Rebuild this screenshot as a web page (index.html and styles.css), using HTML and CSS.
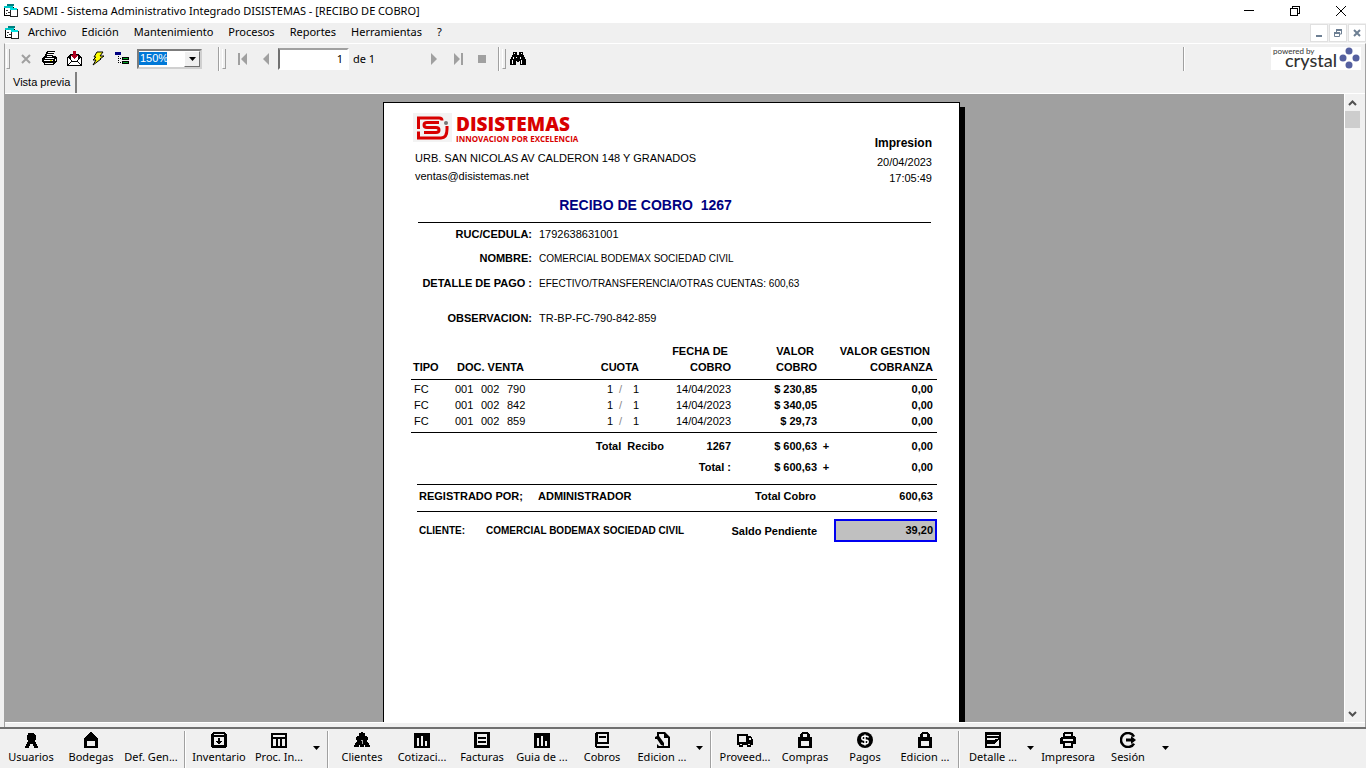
FILE: index.html
```html
<!DOCTYPE html>
<html lang="es">
<head>
<meta charset="utf-8">
<title>SADMI - Sistema Administrativo Integrado DISISTEMAS</title>
<link rel="stylesheet" href="styles.css">
</head>
<body>
<svg class="defs" aria-hidden="true">
  <symbol id="i-app" viewBox="0 0 16 16">
    <path d="M1 4h9v8H1z" fill="#fff" stroke="#000"/><path d="M1 3h9v2H1z" fill="#00c8c8"/>
    <path d="M4 1h7v2H4z" fill="#008080"/><path d="M7 6h7v7H7z" fill="#fff" stroke="#222"/><path d="M7 5h7v2H7z" fill="#00e0e0"/>
    <path d="M3 7h2v1H3zM5 9h2v1H5zM3 10h1v1H3z" fill="#333"/>
  </symbol>
  <symbol id="i-down" viewBox="0 0 7 4"><path d="M0 0h7L3.500 4z"/></symbol>
  <symbol id="i-lock" viewBox="0 0 16 16"><path d="M5 0h6v1h1v1h1v3h2v11H1V5h2V2h1V1h1zM6 2v3h4V2zM4 9v5h8V9z" fill-rule="evenodd"/></symbol>
  <symbol id="i-bars" viewBox="0 0 16 16"><path d="M0 1h16v15H0zM3 6v8h2V6zM7 4v10h2V4zM11 9v5h2V9z" fill-rule="evenodd"/></symbol>
</svg>

<header class="titlebar">
  <svg class="appicon" shape-rendering="crispEdges"><use href="#i-app"/></svg>
  <h1 class="title">SADMI - Sistema Administrativo Integrado DISISTEMAS - [RECIBO DE COBRO]</h1>
  <button class="winbtn" aria-label="Minimizar"><svg width="10" height="11" shape-rendering="crispEdges"><path d="M0 5h10v1H0z"/></svg></button>
  <button class="winbtn" aria-label="Restaurar"><svg width="10" height="10" fill="none" stroke="#000" shape-rendering="crispEdges"><path d="M.5 2.500h7v7h-7zM2.500 2V.5h7v7H8"/></svg></button>
  <button class="winbtn" aria-label="Cerrar"><svg width="10" height="10" stroke="#000"><path d="M0 0l10 10M10 0L0 10"/></svg></button>
</header>

<nav class="menubar">
  <svg class="appicon" shape-rendering="crispEdges"><use href="#i-app"/></svg>
  <button>Archivo</button><button>Edición</button><button>Mantenimiento</button><button>Procesos</button><button>Reportes</button><button>Herramientas</button><button>?</button>
  <span class="mdi">
    <button aria-label="Minimizar ventana"><svg width="8" height="8"><path d="M1 6h6v2H1z" fill="#6d7f93"/></svg></button>
    <button aria-label="Restaurar ventana"><svg width="8" height="8" fill="none" stroke="#6d7f93"><path d="M.5 4.500h5v3h-5zM2.500 4V1.500h5v3.500H6"/><path d="M0 4h6M2 1h6" stroke-width="2"/></svg></button>
    <button aria-label="Cerrar ventana"><svg width="8" height="8" stroke="#6d7f93" stroke-width="2"><path d="M1 1l6 6M7 1L1 7"/></svg></button>
  </span>
</nav>

<main class="window">
  <div class="toolbar">
    <span class="grip"></span>
    <button class="tool" aria-label="Cerrar vista"><svg width="10" height="10" stroke="#a0a0a0" stroke-width="2"><path d="M1 1l8 8M9 1L1 9"/></svg></button>
    <button class="tool" aria-label="Imprimir"><svg width="16" height="15" shape-rendering="crispEdges">
      <path d="M5 0h8v1h-1v2h-1v2h3v1h1v5h-1v1h-1v1h-1v1H2v-2H1v-1H0V7h1V6h1V5h1V3h1V1h1z"/><path d="M6 1h6v1H6zM5 3h6v1H5zM5 5h5v1H5zM3 7h9v1H3zM2 9h9v1H2zM3 12h8v1H3zM13 8h1v2h-1z" fill="#fff"/><path d="M8 9h2v1H8z" fill="#dd0"/></svg></button>
    <button class="tool" aria-label="Exportar"><svg width="15" height="15" shape-rendering="crispEdges">
      <path d="M0 6h1V5h1V4h1V3h9v1h1v1h1v1h1v9H0z"/><path d="M1 7h1v1h1v1h1v1h1v1h5v-1h1V9h1V8h1V7h1v7H1z" fill="#fff"/><path d="M4 4h7v5h-1v1H5V9H4z" fill="#fff"/><path d="M1 13h1v-1h1v-1h1v-1h1v1h5v-1h1v1h1v1h1v1h1v1h-1v-1h-1v-1h-1v-1H4v1H3v1H2v1H1z"/><path d="M6 0h3v4h2v1h-1v1H9v1H8v1H7V7H6V6H5V5H4V4h2z" fill="#b00020"/></svg></button>
    <button class="tool" aria-label="Actualizar"><svg width="14" height="15"><path d="M6 1h6L9 5h4L9 8h1L2 14l3-5H2l3-3H3z" fill="#ff0" stroke="#000"/></svg></button>
    <button class="tool" aria-label="Alternar árbol"><svg width="14" height="13" shape-rendering="crispEdges">
      <path d="M0 0h6v3H0z" fill="#000080"/><path d="M3 4h1v1H3zM3 6h1v1H3zM3 8h1v1H3zM3 10h1v1H3zM5 6h1v1H5zM5 10h1v1H5z"/><path d="M7 5h7v3H7zM7 9h7v3H7z"/><path d="M8 6h5v1H8zM8 10h5v1H8z" fill="#00a020"/></svg></button>
    <span class="zoom"><select aria-label="Zoom"><option>150%</option></select><span class="drop"><svg width="7" height="4"><use href="#i-down"/></svg></span></span>
    <span class="divider"></span><span class="grip"></span>
    <button class="tool" aria-label="Primera página"><svg width="9" height="12" fill="#a0a0a0"><path d="M0 0h2v12H0zM9 0v12L3 6z"/></svg></button>
    <button class="tool" aria-label="Página anterior"><svg width="6" height="12" fill="#a0a0a0"><path d="M6 0v12L0 6z"/></svg></button>
    <input class="pageno" type="text" value="1" aria-label="Página">
    <span class="of">de 1</span>
    <button class="tool" aria-label="Página siguiente"><svg width="6" height="12" fill="#a0a0a0"><path d="M0 0v12l6-6z"/></svg></button>
    <button class="tool" aria-label="Última página"><svg width="9" height="12" fill="#a0a0a0"><path d="M0 0v12l6-6zM7 0h2v12H7z"/></svg></button>
    <button class="tool" aria-label="Detener"><svg width="8" height="8"><path d="M0 0h8v8H0z" fill="#a0a0a0"/></svg></button>
    <span class="divider near"></span><span class="grip tight"></span>
    <button class="tool" aria-label="Buscar"><svg width="16" height="14" shape-rendering="crispEdges">
      <path d="M3 0h4v3h2V0h4v3h1v2h1v2h1v6h-6V9H9v1H7V9H6v4H0V7h1V5h1V3h1z"/><path d="M4 1h1v1H4zM11 1h1v1h-1zM3 5h1v2H3zM6 5h1v1H6zM10 5h1v2h-1zM2 8h1v4H2zM11 8h1v4h-1z" fill="#fff"/></svg></button>
    <span class="divider last"></span>
    <span class="crystal">
      <span class="words"><small>powered by</small><b>crystal</b></span>
      <svg width="22" height="22" fill="#5560a0"><circle cx="10" cy="4" r="3.500"/><circle cx="17" cy="11" r="3.500"/><circle cx="4" cy="11" r="3.500"/><circle cx="10" cy="18" r="3.500"/></svg>
    </span>
  </div>
  <div class="tabs"><button class="tab">Vista previa</button></div>

  <div class="viewer">
    <div class="canvas">
      <article class="paper">
        <header class="head">
          <div>
            <div class="brand">
              <svg width="39" height="29"><path d="M0 0h39v29H0z" fill="#f3f3f3"/><g fill="none" stroke="#d80000" stroke-width="3"><path d="M5.500 16V5H26q3 0 3 2.500"/><path d="M26 9.500H14q-3 0-3 2.500t3 2.500h9q3 0 3 2.500t-3 2.500H11"/><path d="M5.500 18.500V25H28q6 0 6-9v-3"/></g><circle cx="33" cy="10" r="2" fill="#777"/></svg>
              <div class="mark"><strong>DISISTEMAS</strong><span>INNOVACION POR EXCELENCIA</span></div>
            </div>
            <p class="line">URB. SAN NICOLAS AV CALDERON 148 Y GRANADOS</p>
            <p class="line">ventas@disistemas.net</p>
          </div>
          <div class="printed"><b>Impresion</b><span>20/04/2023</span><span>17:05:49</span></div>
        </header>
        <h2 class="doctitle">RECIBO DE COBRO&nbsp; 1267</h2>
        <dl class="fields">
          <dt>RUC/CEDULA:</dt><dd>1792638631001</dd>
          <dt>NOMBRE:</dt><dd class="long">COMERCIAL BODEMAX SOCIEDAD CIVIL</dd>
          <dt>DETALLE DE PAGO :</dt><dd class="long">EFECTIVO/TRANSFERENCIA/OTRAS CUENTAS: 600,63</dd>
          <dt class="obs">OBSERVACION:</dt><dd class="obs">TR-BP-FC-790-842-859</dd>
        </dl>
        <table class="docs">
          <colgroup><col class="c-tipo"><col class="c-doc"><col class="c-doc"><col class="c-num"><col class="c-cuota"><col class="c-bar"><col class="c-bar"><col class="c-gap"><col class="c-fecha"><col class="c-valor"><col class="c-plus"><col></colgroup>
          <thead><tr><th>TIPO</th><th colspan="3">DOC. VENTA</th><th class="r" colspan="3">CUOTA</th><th class="r" colspan="2">FECHA DE&nbsp;<br>COBRO</th><th class="r">VALOR&nbsp;<br>COBRO</th><th class="r" colspan="2">VALOR GESTION&nbsp;<br>COBRANZA</th></tr></thead>
          <tbody>
            <tr><td>FC</td><td>001</td><td>002</td><td>790</td><td class="r">1</td><td class="r bar">/</td><td class="r">1</td><td class="r" colspan="2">14/04/2023</td><td class="r b">$ 230,85</td><td></td><td class="r b">0,00</td></tr>
            <tr><td>FC</td><td>001</td><td>002</td><td>842</td><td class="r">1</td><td class="r bar">/</td><td class="r">1</td><td class="r" colspan="2">14/04/2023</td><td class="r b">$ 340,05</td><td></td><td class="r b">0,00</td></tr>
            <tr><td>FC</td><td>001</td><td>002</td><td>859</td><td class="r">1</td><td class="r bar">/</td><td class="r">1</td><td class="r" colspan="2">14/04/2023</td><td class="r b">$ 29,73</td><td></td><td class="r b">0,00</td></tr>
          </tbody>
          <tfoot>
            <tr><td class="r" colspan="8">Total&nbsp; Recibo</td><td class="r">1267</td><td class="r">$ 600,63</td><td class="plus">+</td><td class="r">0,00</td></tr>
            <tr><td class="r" colspan="9">Total :</td><td class="r">$ 600,63</td><td class="plus">+</td><td class="r">0,00</td></tr>
          </tfoot>
        </table>
        <div class="sum"><span class="reg">REGISTRADO POR;</span><span>ADMINISTRADOR</span><span class="lbl">Total Cobro</span><span class="amt">600,63</span></div>
        <div class="sum client"><span class="cli">CLIENTE:</span><span>COMERCIAL BODEMAX SOCIEDAD CIVIL</span><span class="lbl">Saldo Pendiente</span><span class="amt due">39,20</span></div>
      </article>
    </div>
    <div class="scroll">
      <button aria-label="Subir"><svg width="9" height="6" fill="none" stroke="#505050" stroke-width="2"><path d="M1 5l3.500-3.500L8 5"/></svg></button>
      <span class="thumb"></span>
      <button class="end" aria-label="Bajar"><svg width="9" height="6" fill="none" stroke="#505050" stroke-width="2"><path d="M1 1l3.500 3.500L8 1"/></svg></button>
    </div>
  </div>
</main>

<footer class="dock">
  <button class="item"><svg shape-rendering="crispEdges"><path d="M5 1h6v1h1v1h1v5h-1v2h1v2h1v2h1v2h-4v-2h-1v-2H7v2H6v2H2v-2h1v-2h1v-2h1V8H4V3h1z"/></svg>Usuarios</button>
  <button class="item"><svg shape-rendering="crispEdges"><path d="M7 0h2v1h1v1h1v1h1v1h1v1h1v1h1v10H1V6h1V5h1V4h1V3h1V2h1V1h1zM4 9v5h8V9z" fill-rule="evenodd"/></svg>Bodegas</button>
  <button class="item"><svg></svg>Def. Gen...</button>
  <span class="split"></span>
  <button class="item"><svg shape-rendering="crispEdges"><path d="M2 0h12v1h1v1h1v13h-1v1H1v-1H0V2h1V1h1zM3 2v1h10V2zM3 5v8h10V5z" fill-rule="evenodd"/><path d="M7 6h2v3h2v1h-1v1H9v1H7v-1H6v-1H5V9h2z"/></svg>Inventario</button>
  <button class="item"><svg shape-rendering="crispEdges"><path d="M0 1h16v15H0zM2 3v2h12V3zM2 7v7h3V7zM7 7v7h2V7zM11 7v7h3V7z" fill-rule="evenodd"/></svg>Proc. In...</button>
  <button class="more" aria-label="Más procesos"><svg width="7" height="4"><use href="#i-down"/></svg></button>
  <span class="split"></span>
  <button class="item"><svg shape-rendering="crispEdges"><path d="M7 0h2v1h2v3h2v1h1v3h-1v2h1v1h1v2h1v2h-5v-2h-1v2H6v-2H5v2H0v-2h1v-2h1v-1h1V8H2V5h1V4h2V1h2z"/><path d="M7 8h2v4H7z" fill="#aaa"/><path d="M7 9h1v3H7z"/></svg>Clientes</button>
  <button class="item"><svg shape-rendering="crispEdges"><use href="#i-bars"/></svg>Cotizaci...</button>
  <button class="item"><svg shape-rendering="crispEdges"><path d="M0 0h16v16H0zM3 2v11h10V2z" fill-rule="evenodd"/><path d="M4 5h8v2H4zM4 9h8v2H4z"/></svg>Facturas</button>
  <button class="item"><svg shape-rendering="crispEdges"><use href="#i-bars"/></svg>Guia de ...</button>
  <button class="item"><svg shape-rendering="crispEdges"><path d="M2 0h13v12H3v2h12v2H2v-1H1V1h1zM4 2v8h9V2z" fill-rule="evenodd"/><path d="M5 4h7v2H5z"/></svg>Cobros</button>
  <button class="item"><svg><path d="M3 0h8l5 5v11H3v-4l2 2h9V6h-4V2H5v2l5 7v3l-3-1-4-6H1V5l2-1z" fill-rule="evenodd"/></svg>Edicion ...</button>
  <button class="more" aria-label="Más ediciones"><svg width="7" height="4"><use href="#i-down"/></svg></button>
  <span class="split"></span>
  <button class="item"><svg shape-rendering="crispEdges"><path d="M0 2h11v2h3v1h1v2h1v6h-2v2h-4v-2H6v2H2v-2H0zM2 4v6h7V4zM12 6v2h2V6zM3 12v1h2v-1zM11 12v1h2v-1z" fill-rule="evenodd"/></svg>Proveed...</button>
  <button class="item"><svg shape-rendering="crispEdges"><use href="#i-lock"/></svg>Compras</button>
  <button class="item"><svg><circle cx="8" cy="8" r="8"/><path d="M11.500 5.500Q11 4 8 4T4.800 6 8 8t3.200 2T8 12t-3.500-1.500M8 2.500v11" fill="none" stroke="#fff" stroke-width="1.500"/></svg>Pagos</button>
  <button class="item"><svg shape-rendering="crispEdges"><use href="#i-lock"/></svg>Edicion ...</button>
  <span class="split"></span>
  <button class="item"><svg shape-rendering="crispEdges"><path d="M0 0h16v16H0zM2 3v1h12V3zM2 6v8h12V6z" fill-rule="evenodd"/><path d="M2 8h7l5-2v1l-4 5H2z"/></svg>Detalle ...</button>
  <button class="more" aria-label="Más detalle"><svg width="7" height="4"><use href="#i-down"/></svg></button>
  <button class="item"><svg shape-rendering="crispEdges"><path d="M4 0h9v4h2v1h1v7h-3v4H3v-4H0V6h1V5h2V1h1zM5 2v2h6V2zM3 7v2h10V7zM5 11v3h6v-3z" fill-rule="evenodd"/></svg>Impresora</button>
  <button class="item"><svg><path d="M14 4.500A7 7 0 1 0 14 11.500" fill="none" stroke="#000" stroke-width="2.500"/><path d="M6 6.500h5V4l5 4-5 4V9.500H6z"/></svg>Sesión</button>
  <button class="more" aria-label="Más sesión"><svg width="7" height="4"><use href="#i-down"/></svg></button>
</footer>
</body>
</html>
```
FILE: styles.css
```css
* { box-sizing: border-box; }
body {
  margin: 0;
  height: 100vh;
  display: flex;
  flex-direction: column;
  overflow: hidden;
  background: #f0f0f0;
  color: #000;
  font: 11px/16px "Noto Sans", "Open Sans", sans-serif;
}
button {
  margin: 0;
  padding: 0;
  border: 0;
  background: none;
  color: inherit;
  font: inherit;
}
svg { display: block; flex: none; }
h1, h2, p, dl, dd { margin: 0; }
.defs { position: absolute; width: 0; height: 0; }
.appicon { width: 16px; height: 16px; }

/* Title bar */
.titlebar { display: flex; align-items: center; height: 23px; padding: 0 2px 2px 3px; background: #fff; }
.title { flex: 1; margin-left: 4px; font-size: 11px; font-weight: 400; }
.winbtn { display: flex; align-items: center; justify-content: center; width: 46px; height: 20px; }

/* Menu bar */
.menubar { display: flex; align-items: center; height: 20px; padding-left: 4px; }
.menubar > button { margin-left: 8px; margin-right: 7px; padding-bottom: 2px; }
.mdi { display: flex; gap: 1px; margin-left: auto; }
.mdi button { display: flex; align-items: center; justify-content: center; width: 18px; height: 18px; border: 1px solid #e0e0e0; background: #fff; }

/* Report window */
.window {
  flex: 1;
  min-height: 0;
  display: flex;
  flex-direction: column;
  margin-left: 4px;
  border-top: 1px solid #fff;
  border-left: 1px solid #a0a0a0;
  border-right: 1px solid #a0a0a0;
}
.toolbar { display: flex; align-items: center; height: 28px; padding: 1px 0 0 1px; }
.grip { width: 4px; height: 20px; margin-right: 4px; border-right: 1px solid #a0a0a0; border-bottom: 1px solid #a0a0a0; border-left: 1px solid #fff; }
.grip.tight { margin-right: 0; }
.divider { width: 2px; height: 24px; margin: 0 2px 0 16px; border-left: 1px solid #a0a0a0; border-right: 1px solid #fff; }
.divider.near { margin-left: 4px; }
.divider.last { margin-left: auto; margin-right: 86px; }
.tool { display: flex; align-items: center; justify-content: center; width: 24px; height: 22px; }
.zoom { position: relative; width: 65px; height: 20px; margin-left: 3px; }
.zoom select {
  appearance: none;
  width: 100%;
  height: 100%;
  padding: 0 0 2px 1px;
  border: 2px inset #d0d0d0;
  border-radius: 0;
  background: linear-gradient(#0078d7, #0078d7) 0 1px / 28px 13px no-repeat #fff;
  color: #fff;
  font: 11px/14px "Liberation Sans", sans-serif;
}
.drop { position: absolute; top: 2px; right: 2px; width: 16px; height: 16px; display: flex; align-items: center; justify-content: center; background: #f0f0f0; border: 1px solid; border-color: #fff #707070 #707070 #fff; pointer-events: none; }
.pageno { width: 71px; height: 22px; padding: 0 4px; border: 2px solid; border-color: #a0a0a0 #fff #fff #a0a0a0; border-left-color: #707070; border-radius: 0; background: #fff; font: inherit; text-align: right; }
.of { width: 69px; margin-left: 4px; }
.crystal { display: flex; width: 90px; height: 23px; margin-right: 4px; background: #fff; color: #333; font-family: Lato, sans-serif; }
.words { display: flex; flex-direction: column; width: 68px; padding-left: 2px; }
.words small { font-size: 8px; line-height: 8px; }
.words b { padding-left: 12px; font-size: 18px; line-height: 11px; font-weight: 500; }
.tabs { display: flex; height: 22px; border-bottom: 1px solid #fff; }
.tab { padding: 0 5px 2px 8px; border-right: 2px solid #808080; background: #f0f0f0; font: 11px/16px "Liberation Sans", sans-serif; }

/* Report viewer */
.viewer { flex: 1; min-height: 0; display: flex; margin-bottom: 4px; border-bottom: 1px solid #fff; }
.canvas { flex: 1; display: flex; justify-content: center; align-items: stretch; padding: 8px 6px 0 0; overflow: hidden; background: #a0a0a0; }
.scroll { display: flex; flex-direction: column; width: 16px; margin-right: 5px; border-left: 1px solid #fff; }
.scroll button { display: flex; align-items: center; justify-content: center; height: 17px; }
.scroll .end { margin-top: auto; }
.thumb { height: 17px; background: #cdcdcd; }

/* Receipt page */
.paper {
  width: 577px;
  padding: 10px 22px 0 27px;
  border: 1px solid #000;
  border-bottom: 0;
  background: #fff;
  box-shadow: 5px 5px 0 #000;
  font: 11px/16px "Liberation Sans", sans-serif;
}
.head { display: flex; justify-content: space-between; height: 84px; padding: 0 5px 0 2px; }
.brand { display: flex; gap: 4px; height: 36px; color: #d80000; font-family: "Open Sans", sans-serif; font-weight: 700; }
.mark { display: flex; flex-direction: column; }
.mark strong { font-size: 19px; line-height: 22px; }
.mark span { font-size: 8px; line-height: 8px; }
.line { padding-left: 2px; line-height: 18px; }
.printed { display: flex; flex-direction: column; padding-top: 19px; text-align: right; }
.printed b { font-size: 12px; line-height: 22px; }
.doctitle { padding: 0 58px 8px 0; margin: 0 6px 0 7px; border-bottom: 1px solid #000; color: #000080; font-size: 14px; line-height: 17px; text-align: center; }
.fields { display: grid; grid-template-columns: 121px 1fr; column-gap: 7px; grid-template-rows: 24px 25px 27px 41px; padding-top: 3px; }
.fields dt { font-weight: 700; text-align: right; }
.fields .long { font-size: 10px; line-height: 18px; }
.fields .obs { padding-top: 8px; }

.docs { width: 100%; border-collapse: collapse; table-layout: fixed; }
.docs th, .docs td { padding: 0; font-weight: inherit; text-align: left; vertical-align: top; white-space: nowrap; }
.docs th { padding: 0 2px 4px; font-weight: 700; vertical-align: bottom; }
.docs td:first-child { padding-left: 3px; }
.docs .r { padding-left: 0; padding-right: 0; text-align: right; }
.docs .r:last-child { padding-right: 4px; }
.docs .b, .docs tfoot { font-weight: 700; }
.docs .bar { padding-right: 4px; color: #888; }
.docs .plus { text-align: center; }
.docs thead tr { border-bottom: 1px solid #000; }
.docs tbody tr { height: 16px; }
.docs tbody tr:first-child td { padding-top: 1px; }
.docs tbody tr:last-child { height: 19px; border-bottom: 1px solid #000; }
.docs tfoot tr { height: 20px; }
.docs tfoot td { padding-top: 5px; }
.c-tipo { width: 44px; }
.c-doc { width: 26px; }
.c-num { width: 82px; }
.c-cuota { width: 24px; }
.c-bar { width: 13px; }
.c-gap { width: 25px; }
.c-fecha { width: 67px; }
.c-valor { width: 86px; }
.c-plus { width: 18px; }

.sum { display: flex; align-items: center; height: 27px; margin: 0 0 0 6px; padding: 0 4px 3px 2px; border-bottom: 1px solid #000; font-weight: 700; }
.docs + .sum { height: 28px; margin-top: 9px; border-top: 1px solid #000; }
.reg { width: 119px; }
.cli { width: 67px; }
.lbl { margin-left: auto; }
.amt { width: 117px; text-align: right; }
.client { height: 41px; padding-right: 0; border: 0; }
.client > :nth-child(-n+2) { font-size: 10px; line-height: 18px; }
.due { width: 103px; margin-left: 17px; padding-right: 2px; border: 2px solid #0000f0; background: #c0c0c0; line-height: 19px; }

/* Bottom toolbar */
.dock { display: flex; height: 41px; padding: 2px 0 0 1px; border-top: 2px solid #707070; }
.item { display: flex; flex-direction: column; align-items: center; gap: 1px; width: 60px; padding-top: 1px; white-space: nowrap; }
.item svg { width: 16px; height: 16px; }
.more { display: flex; align-items: center; justify-content: center; width: 15px; padding-bottom: 4px; }
.split { width: 2px; margin: 0 3px; border-left: 1px solid #a0a0a0; border-right: 1px solid #fff; }
```
